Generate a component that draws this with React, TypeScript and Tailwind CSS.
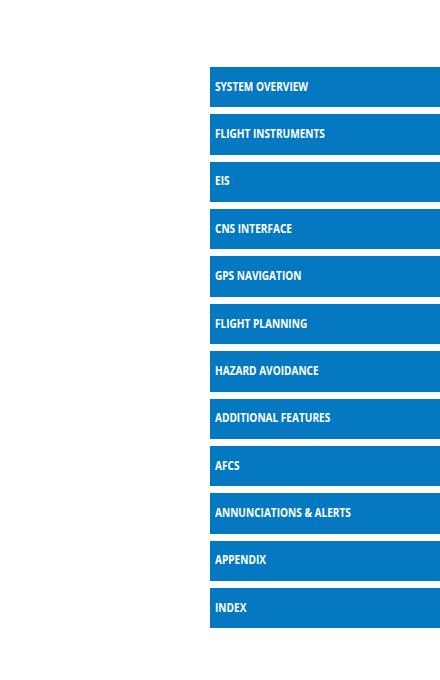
const sections = [
  "SYSTEM OVERVIEW",
  "FLIGHT INSTRUMENTS",
  "EIS",
  "CNS INTERFACE",
  "GPS NAVIGATION",
  "FLIGHT PLANNING",
  "HAZARD AVOIDANCE",
  "ADDITIONAL FEATURES",
  "AFCS",
  "ANNUNCIATIONS & ALERTS",
  "APPENDIX",
  "INDEX",
];

export default function App() {
  return (
    <div className="w-[440px] h-[680px] bg-white flex justify-end pt-[67px]">
      <nav className="w-[230px] flex flex-col gap-[7px]">
        {sections.map((s) => (
          <a
            key={s}
            href="#"
            className="h-[40.36px] flex items-center pl-[5px] bg-[#0479c1] text-white"
          >
            <span className="inline-block origin-left scale-x-[0.8] whitespace-nowrap font-bold text-[12.6px] font-['Open_Sans',sans-serif]">
              {s}
            </span>
          </a>
        ))}
      </nav>
    </div>
  );
}
